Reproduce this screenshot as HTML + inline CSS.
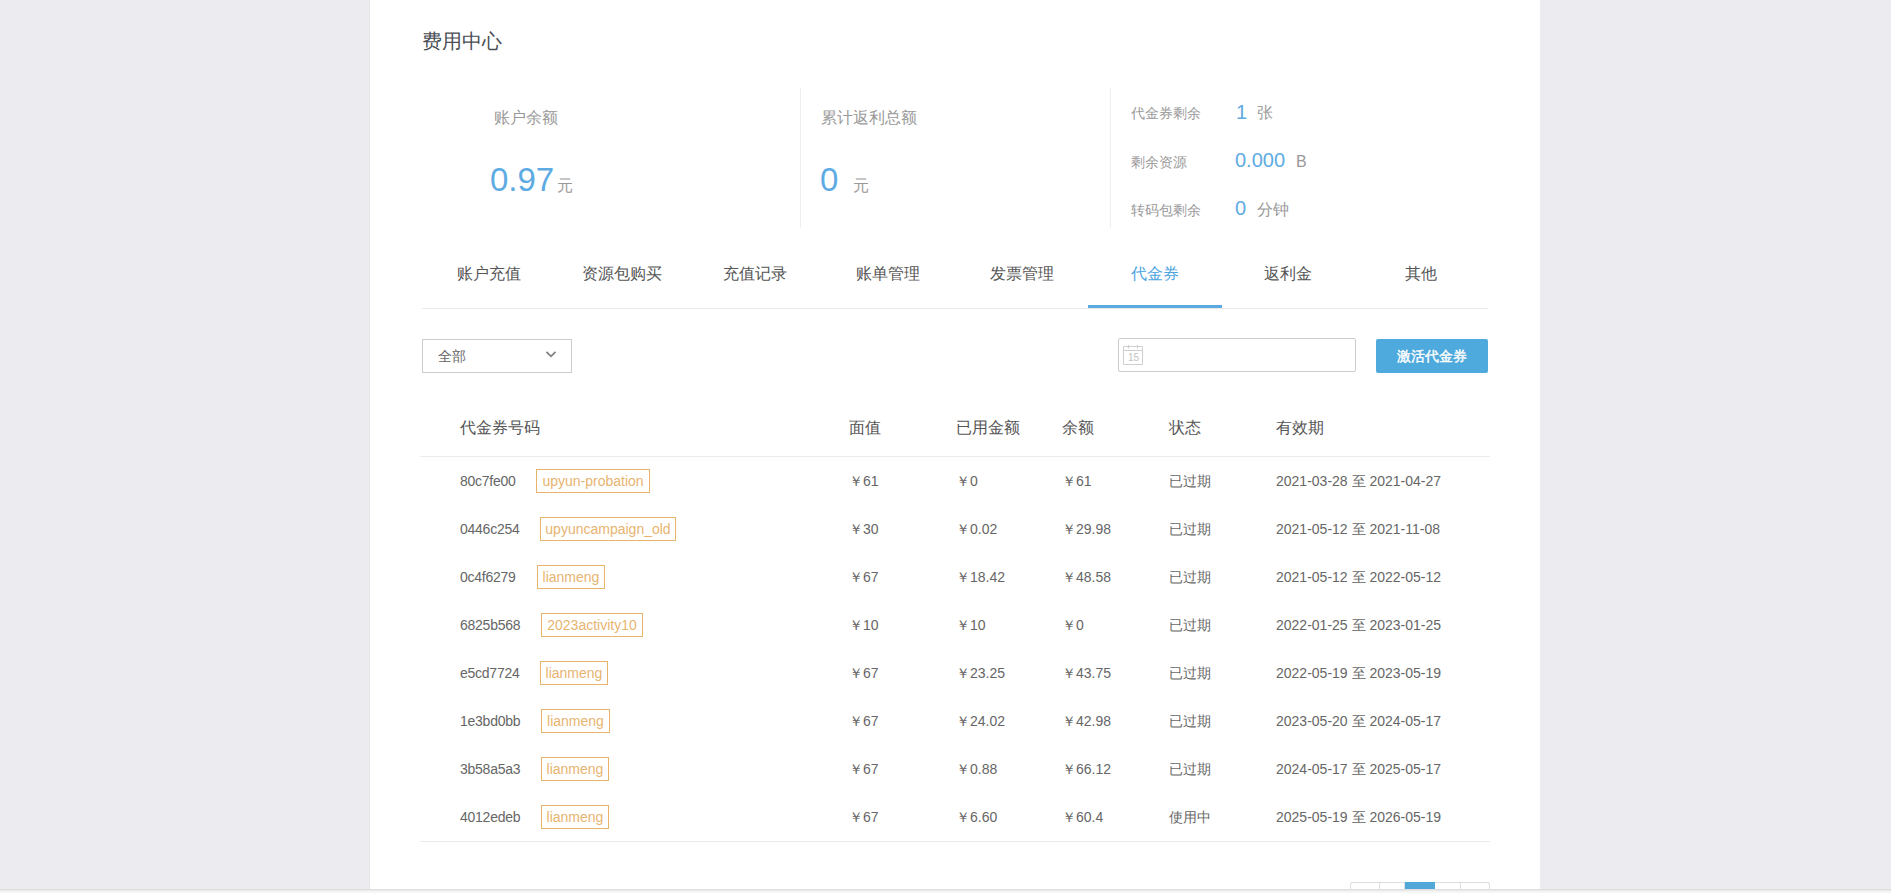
<!DOCTYPE html>
<html><head><meta charset="utf-8">
<style>
html,body{margin:0;padding:0;}
body{width:1891px;height:893px;overflow:hidden;position:relative;background:#ececf0;font-family:"Liberation Sans",sans-serif;}
.panel{position:absolute;left:370px;top:0;width:1170px;height:889px;background:#fff;}
.edgeL{position:absolute;left:369px;top:0;width:1px;height:889px;background:#e6e6e9;}
.bar1{position:absolute;left:0;top:889px;width:1891px;height:1px;background:#dfdfdf;}
.bar2{position:absolute;left:0;top:890px;width:1891px;height:1px;background:#e9e9e9;}
.bar3{position:absolute;left:0;top:891px;width:1891px;height:2px;background:#f4f5f5;}
.t{position:absolute;white-space:nowrap;line-height:1;}
.title{left:422px;top:31px;font-size:20px;color:#4a4e56;}
.lbl{font-size:16px;color:#999;}
.big{font-size:33px;color:#5eabe4;}
.unit{font-size:16px;color:#999;}
.vdiv{position:absolute;top:88px;width:1px;height:140px;background:#eee;}
.slbl{font-size:14px;color:#999;}
.sval{font-size:20px;color:#5eabe4;}
.tab{position:absolute;top:264px;font-size:16px;color:#555;line-height:20px;text-align:center;width:133.25px;}
.tab.on{color:#4ea5e0;}
.tabline{position:absolute;left:422px;top:308px;width:1066px;height:1px;background:#eaeaea;}
.tabul{position:absolute;left:1088px;top:305px;width:134px;height:3px;background:#5aa9e0;}
.sel{position:absolute;left:422px;top:339px;width:148px;height:32px;border:1px solid #ccc;}
.date{position:absolute;left:1118px;top:338px;width:236px;height:32px;border:1px solid #ccc;border-radius:2px;}
.btn{position:absolute;left:1376px;top:339px;width:112px;height:34px;background:#4ea9dc;border-radius:2px;}
.th{font-size:16px;color:#555;}
.hline{position:absolute;left:420px;width:1070px;height:1px;background:#ebebeb;}
.td{font-size:14px;color:#666;}
.tag{position:absolute;height:22px;border:1px solid #e8b46c;color:#e8b470;font-size:14px;line-height:22px;text-align:center;box-sizing:content-box;}
.pg{position:absolute;top:882px;height:10px;border:1px solid #ddd;border-bottom:none;}
</style></head><body>
<div class="panel"></div>
<div class="edgeL"></div>

<div class="t title">费用中心</div>

<div class="t lbl" style="left:494px;top:110px;">账户余额</div>
<div class="t big" style="left:490px;top:163px;">0.97</div>
<div class="t unit" style="left:557px;top:178px;">元</div>
<div class="vdiv" style="left:800px;"></div>
<div class="t lbl" style="left:821px;top:110px;">累计返利总额</div>
<div class="t big" style="left:820px;top:163px;">0</div>
<div class="t unit" style="left:853px;top:178px;">元</div>
<div class="vdiv" style="left:1110px;"></div>

<div class="t slbl" style="left:1131px;top:106px;">代金券剩余</div>
<div class="t sval" style="left:1236px;top:102px;">1</div>
<div class="t unit" style="left:1257px;top:105px;">张</div>
<div class="t slbl" style="left:1131px;top:155px;">剩余资源</div>
<div class="t sval" style="left:1235px;top:150px;">0.000</div>
<div class="t unit" style="left:1296px;top:154px;">B</div>
<div class="t slbl" style="left:1131px;top:203px;">转码包剩余</div>
<div class="t sval" style="left:1235px;top:198px;">0</div>
<div class="t unit" style="left:1257px;top:202px;">分钟</div>

<div class="tab" style="left:422px;">账户充值</div>
<div class="tab" style="left:555.25px;">资源包购买</div>
<div class="tab" style="left:688.5px;">充值记录</div>
<div class="tab" style="left:821.75px;">账单管理</div>
<div class="tab" style="left:955px;">发票管理</div>
<div class="tab on" style="left:1088.25px;">代金券</div>
<div class="tab" style="left:1221.5px;">返利金</div>
<div class="tab" style="left:1354.75px;">其他</div>
<div class="tabline"></div>
<div class="tabul"></div>

<div class="sel"></div>
<div class="t" style="left:438px;top:350px;font-size:13.5px;color:#666;">全部</div>
<svg style="position:absolute;left:545px;top:350px" width="12" height="9" viewBox="0 0 12 9"><path d="M1.5 1.8 L6 6.3 L10.5 1.8" fill="none" stroke="#808080" stroke-width="1.8"/></svg>

<div class="date"></div>
<svg style="position:absolute;left:1123px;top:344px" width="21" height="22" viewBox="0 0 21 22">
<path d="M0.5 2.5 H19.5 V20.5 H0.5 Z M0.5 6.5 H19.5" fill="none" stroke="#cfcfcf" stroke-width="1"/>
<path d="M5.5 1 V4.5 M14.5 1 V4.5" stroke="#cfcfcf" stroke-width="1"/>
</svg>
<div class="t" style="left:1128px;top:353px;font-size:10px;color:#c4c4c4;">15</div>
<div class="btn"></div>
<div class="t" style="left:1397px;top:349px;font-size:14px;color:#fff;-webkit-text-stroke:0.4px #fff;">激活代金券</div>

<div class="t th" style="left:460px;top:420px;">代金券号码</div>
<div class="t th" style="left:849px;top:420px;">面值</div>
<div class="t th" style="left:956px;top:420px;">已用金额</div>
<div class="t th" style="left:1062px;top:420px;">余额</div>
<div class="t th" style="left:1169px;top:420px;">状态</div>
<div class="t th" style="left:1276px;top:420px;">有效期</div>
<div class="hline" style="top:456px;"></div>

<div id="rows">
<div class="t td" style="left:460px;top:474px;letter-spacing:-0.25px;">80c7fe00</div>
<div class="tag" style="left:536px;top:469px;width:112px;">upyun-probation</div>
<div class="t td" style="left:849px;top:474px;">￥61</div>
<div class="t td" style="left:956px;top:474px;">￥0</div>
<div class="t td" style="left:1062px;top:474px;">￥61</div>
<div class="t td" style="left:1169px;top:474px;">已过期</div>
<div class="t td" style="left:1276px;top:474px;">2021-03-28 至 2021-04-27</div>
<div class="t td" style="left:460px;top:522px;letter-spacing:-0.25px;">0446c254</div>
<div class="tag" style="left:540px;top:517px;width:134px;">upyuncampaign_old</div>
<div class="t td" style="left:849px;top:522px;">￥30</div>
<div class="t td" style="left:956px;top:522px;">￥0.02</div>
<div class="t td" style="left:1062px;top:522px;">￥29.98</div>
<div class="t td" style="left:1169px;top:522px;">已过期</div>
<div class="t td" style="left:1276px;top:522px;">2021-05-12 至 2021-11-08</div>
<div class="t td" style="left:460px;top:570px;letter-spacing:-0.25px;">0c4f6279</div>
<div class="tag" style="left:537px;top:565px;width:66px;">lianmeng</div>
<div class="t td" style="left:849px;top:570px;">￥67</div>
<div class="t td" style="left:956px;top:570px;">￥18.42</div>
<div class="t td" style="left:1062px;top:570px;">￥48.58</div>
<div class="t td" style="left:1169px;top:570px;">已过期</div>
<div class="t td" style="left:1276px;top:570px;">2021-05-12 至 2022-05-12</div>
<div class="t td" style="left:460px;top:618px;letter-spacing:-0.25px;">6825b568</div>
<div class="tag" style="left:541px;top:613px;width:100px;">2023activity10</div>
<div class="t td" style="left:849px;top:618px;">￥10</div>
<div class="t td" style="left:956px;top:618px;">￥10</div>
<div class="t td" style="left:1062px;top:618px;">￥0</div>
<div class="t td" style="left:1169px;top:618px;">已过期</div>
<div class="t td" style="left:1276px;top:618px;">2022-01-25 至 2023-01-25</div>
<div class="t td" style="left:460px;top:666px;letter-spacing:-0.25px;">e5cd7724</div>
<div class="tag" style="left:540px;top:661px;width:66px;">lianmeng</div>
<div class="t td" style="left:849px;top:666px;">￥67</div>
<div class="t td" style="left:956px;top:666px;">￥23.25</div>
<div class="t td" style="left:1062px;top:666px;">￥43.75</div>
<div class="t td" style="left:1169px;top:666px;">已过期</div>
<div class="t td" style="left:1276px;top:666px;">2022-05-19 至 2023-05-19</div>
<div class="t td" style="left:460px;top:714px;letter-spacing:-0.25px;">1e3bd0bb</div>
<div class="tag" style="left:541px;top:709px;width:67px;">lianmeng</div>
<div class="t td" style="left:849px;top:714px;">￥67</div>
<div class="t td" style="left:956px;top:714px;">￥24.02</div>
<div class="t td" style="left:1062px;top:714px;">￥42.98</div>
<div class="t td" style="left:1169px;top:714px;">已过期</div>
<div class="t td" style="left:1276px;top:714px;">2023-05-20 至 2024-05-17</div>
<div class="t td" style="left:460px;top:762px;letter-spacing:-0.25px;">3b58a5a3</div>
<div class="tag" style="left:541px;top:757px;width:66px;">lianmeng</div>
<div class="t td" style="left:849px;top:762px;">￥67</div>
<div class="t td" style="left:956px;top:762px;">￥0.88</div>
<div class="t td" style="left:1062px;top:762px;">￥66.12</div>
<div class="t td" style="left:1169px;top:762px;">已过期</div>
<div class="t td" style="left:1276px;top:762px;">2024-05-17 至 2025-05-17</div>
<div class="t td" style="left:460px;top:810px;letter-spacing:-0.25px;">4012edeb</div>
<div class="tag" style="left:541px;top:805px;width:66px;">lianmeng</div>
<div class="t td" style="left:849px;top:810px;">￥67</div>
<div class="t td" style="left:956px;top:810px;">￥6.60</div>
<div class="t td" style="left:1062px;top:810px;">￥60.4</div>
<div class="t td" style="left:1169px;top:810px;">使用中</div>
<div class="t td" style="left:1276px;top:810px;">2025-05-19 至 2026-05-19</div>
</div>
<div class="hline" style="top:841px;"></div>

<div class="pg" style="left:1350px;width:28px;border-radius:3px 0 0 0;"></div>
<div class="pg" style="left:1379px;width:25px;border-left:none;"></div>
<div style="position:absolute;left:1405px;top:882px;width:30px;height:7px;background:#4fa8d8;"></div>
<div class="pg" style="left:1435px;width:25px;border-left:none;border-right:none;"></div>
<div class="pg" style="left:1460px;width:28px;border-radius:0 3px 0 0;"></div>

<div class="bar1"></div><div class="bar2"></div><div class="bar3"></div>
</body></html>
